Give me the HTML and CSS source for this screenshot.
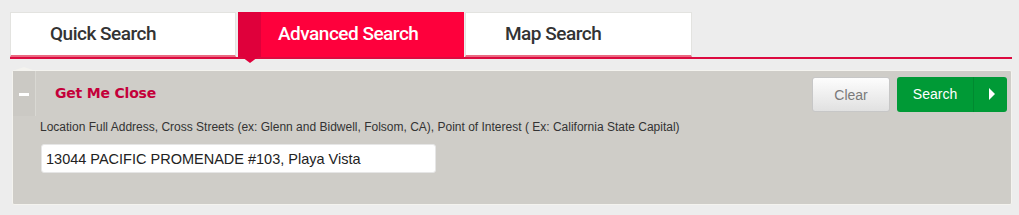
FILE: index.html
```html
<!DOCTYPE html>
<html>
<head>
<meta charset="utf-8">
<link rel="stylesheet" href="styles.css">
</head>
<body>
<div class="wrap">
  <div class="tabs">
    <div class="tab">Quick Search</div>
    <div class="tab active"><span class="tab-edge"></span>Advanced Search</div>
    <div class="tab">Map Search</div>
  </div>
  <div class="panel">
    <div class="panel-head">
      <div class="strip"><span class="minus"></span></div>
      <div class="title">Get Me Close</div>
      <div class="actions">
        <button class="btn-clear">Clear</button>
        <button class="btn-search"><span class="btn-label">Search</span><span class="btn-arrow"></span></button>
      </div>
    </div>
    <div class="panel-body">
      <div class="label">Location Full Address, Cross Streets (ex: Glenn and Bidwell, Folsom, CA), Point of Interest ( Ex: California State Capital)</div>
      <input class="field" type="text" value="13044 PACIFIC PROMENADE #103, Playa Vista">
    </div>
  </div>
</div>
</body>
</html>
```
FILE: styles.css
```css
html, body {
  margin: 0;
  padding: 0;
  background: #ededed;
}
.wrap {
  padding: 12px 0 0 10px;
  width: 1002px;
}
.tabs {
  display: flex;
  gap: 2px;
  border-bottom: 2px solid #dc0a3f;
  height: 45px;
}
.tab {
  position: relative;
  width: 226px;
  box-sizing: border-box;
  height: 45px;
  background: #fff;
  border: 1px solid #e3e3e0;
  border-bottom: 2px solid #ea6a82;
  padding-left: 39px;
  font-family: Roboto, "Liberation Sans", sans-serif;
  font-weight: 500;
  font-size: 19px;
  letter-spacing: -0.5px;
  color: #333;
  line-height: 42px;
}
.tab:last-child {
  width: 227px;
  margin-left: -1px;
}
.tab.active {
  background: #fe003c;
  border: none;
  color: #fff;
  padding-left: 40px;
  line-height: 43px;
}
.tab-edge {
  position: absolute;
  left: 0;
  top: 0;
  width: 23px;
  height: 45px;
  background: #df003b;
}
.tab-edge::after {
  content: "";
  position: absolute;
  left: 4px;
  top: 45px;
  border-left: 8px solid transparent;
  border-right: 8px solid transparent;
  border-top: 6px solid #df003b;
}
.panel {
  margin: 11px 0 0 2px;
  width: 1000px;
  box-sizing: border-box;
  background: #cfcdc8;
  border: 1px solid #f4f3ef;
  border-radius: 2px;
  height: 135px;
}
.panel-head {
  display: flex;
  align-items: flex-start;
  height: 45px;
}
.strip {
  position: relative;
  width: 22px;
  height: 45px;
  flex: none;
  border-right: 1px solid #d9d8d3;
  background: #cbc9c4;
}
.strip::before {
  content: "";
  position: absolute;
  left: -1px;
  top: -4px;
  border-left: 12px solid transparent;
  border-right: 12px solid transparent;
  border-bottom: 4px solid #f4f3ef;
}
.minus {
  position: absolute;
  left: 6px;
  top: 22px;
  width: 10px;
  height: 3px;
  background: #fff;
}
.title {
  margin: 14px 0 0 19px;
  font-family: "DejaVu Sans", Verdana, sans-serif;
  font-weight: bold;
  font-size: 14px;
  color: #c4003a;
  letter-spacing: -0.2px;
  flex: 1;
}
.actions {
  display: flex;
  gap: 7px;
  margin: 6px 4px 0 0;
}
.btn-clear {
  width: 78px;
  height: 35px;
  border: 1px solid #c7c7c7;
  border-radius: 3px;
  background: linear-gradient(#fdfdfd, #e1e1e1);
  color: #7a7a7a;
  font-family: "Liberation Sans", Arial, sans-serif;
  font-size: 14px;
  padding: 0;
}
.btn-search {
  display: flex;
  align-items: stretch;
  width: 110px;
  height: 35px;
  padding: 0;
  border: none;
  border-radius: 3px;
  background: #009a36;
  color: #fff;
  font-family: "Liberation Sans", Arial, sans-serif;
  font-size: 14px;
}
.btn-label {
  width: 76px;
  line-height: 35px;
  border-right: 1px solid #008a30;
  text-align: center;
}
.btn-arrow {
  flex: 1;
  position: relative;
}
.btn-arrow::after {
  content: "";
  position: absolute;
  left: 15px;
  top: 11px;
  border-top: 6px solid transparent;
  border-bottom: 6px solid transparent;
  border-left: 6px solid #fff;
}
.panel-body {
  padding: 4px 0 0 27px;
}
.label {
  font-family: "Liberation Sans", Arial, sans-serif;
  font-size: 12px;
  color: #333;
  line-height: 14px;
  margin-bottom: 10px;
}
.field {
  display: block;
  margin-left: 1px;
  width: 395px;
  height: 29px;
  box-sizing: border-box;
  border: 1px solid #e6e6e6;
  border-radius: 3px;
  background: #fff;
  padding: 0 4px;
  font-family: "Liberation Sans", Arial, sans-serif;
  font-size: 14.5px;
  color: #222;
  outline: none;
}
```
